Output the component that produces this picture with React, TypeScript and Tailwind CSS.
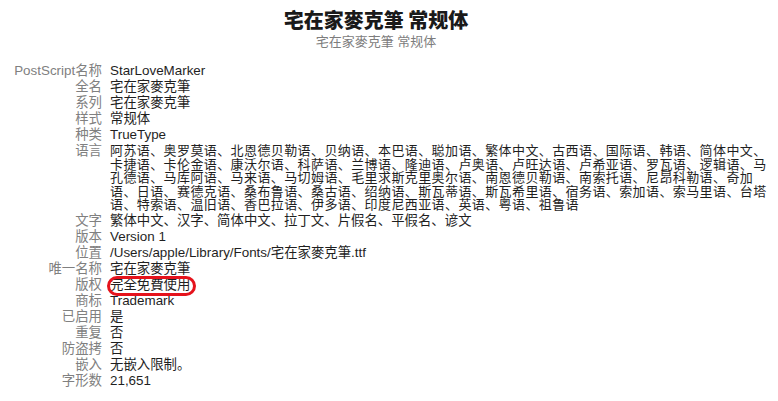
import React from "react";

const font = `font-["Liberation_Sans","Noto_Sans_CJK_SC",sans-serif]`;

type Row = { label: string; value: React.ReactNode };

const langLines = [
  "阿苏语、奥罗莫语、北恩德贝勒语、贝纳语、本巴语、聪加语、繁体中文、古西语、国际语、韩语、简体中文、",
  "卡捷语、卡伦金语、康沃尔语、科萨语、兰博语、隆迪语、卢奥语、卢旺达语、卢希亚语、罗瓦语、逻辑语、马",
  "孔德语、马库阿语、马来语、马切姆语、毛里求斯克里奥尔语、南恩德贝勒语、南索托语、尼昂科勒语、奇加",
  "语、日语、赛德克语、桑布鲁语、桑古语、绍纳语、斯瓦蒂语、斯瓦希里语、宿务语、索加语、索马里语、台塔",
  "语、特索语、温旧语、香巴拉语、伊多语、印度尼西亚语、英语、粤语、祖鲁语",
];

export default function App() {
  const rows: Row[] = [
    { label: "PostScript名称", value: "StarLoveMarker" },
    { label: "全名", value: "宅在家麥克筆" },
    { label: "系列", value: "宅在家麥克筆" },
    { label: "样式", value: "常规体" },
    { label: "种类", value: "TrueType" },
    {
      label: "语言",
      value: (
        <div className="leading-[13.6px] text-[13px] tracking-[0.4px]">
          {langLines.map((l, i) => (
            <div key={i} className="whitespace-nowrap">
              {l}
            </div>
          ))}
        </div>
      ),
    },
    { label: "文字", value: "繁体中文、汉字、简体中文、拉丁文、片假名、平假名、谚文" },
    { label: "版本", value: "Version 1" },
    { label: "位置", value: "/Users/apple/Library/Fonts/宅在家麥克筆.ttf" },
    { label: "唯一名称", value: "宅在家麥克筆" },
    {
      label: "版权",
      value: (
        <span className="relative inline-block">
          完全免費使用
          <span className="absolute -left-[3px] -right-[6px] -top-[2px] -bottom-[4px] border-[3px] border-[#e5131c] rounded-[11px]" />
        </span>
      ),
    },
    { label: "商标", value: "Trademark" },
    { label: "已启用", value: "是" },
    { label: "重复", value: "否" },
    { label: "防盗拷", value: "否" },
    { label: "嵌入", value: "无嵌入限制。" },
    { label: "字形数", value: "21,651" },
  ];

  return (
    <div className={`w-[778px] h-[401px] bg-white overflow-hidden ${font}`}>
      <div className="flex flex-col items-center pr-[26px] pt-[9px]">
        <div className="text-[20px] leading-[22px] font-black text-[#1a1a1a] font-['Noto_Sans_CJK_SC',sans-serif]">
          宅在家麥克筆 常规体
        </div>
        <div className="mt-[3px] text-[13px] leading-[15px] text-[#7d7d7d]">宅在家麥克筆 常规体</div>
      </div>
      <div className="mt-[14px] grid grid-cols-[102px_1fr] gap-x-[8px] text-[13.4px] leading-[14px]">
        {rows.map((r, i) => (
          <React.Fragment key={i}>
            <div className="text-right text-[#808080] py-px whitespace-nowrap">{r.label}</div>
            <div className="text-[#1f1f1f] py-px whitespace-nowrap">{r.value}</div>
          </React.Fragment>
        ))}
      </div>
    </div>
  );
}
